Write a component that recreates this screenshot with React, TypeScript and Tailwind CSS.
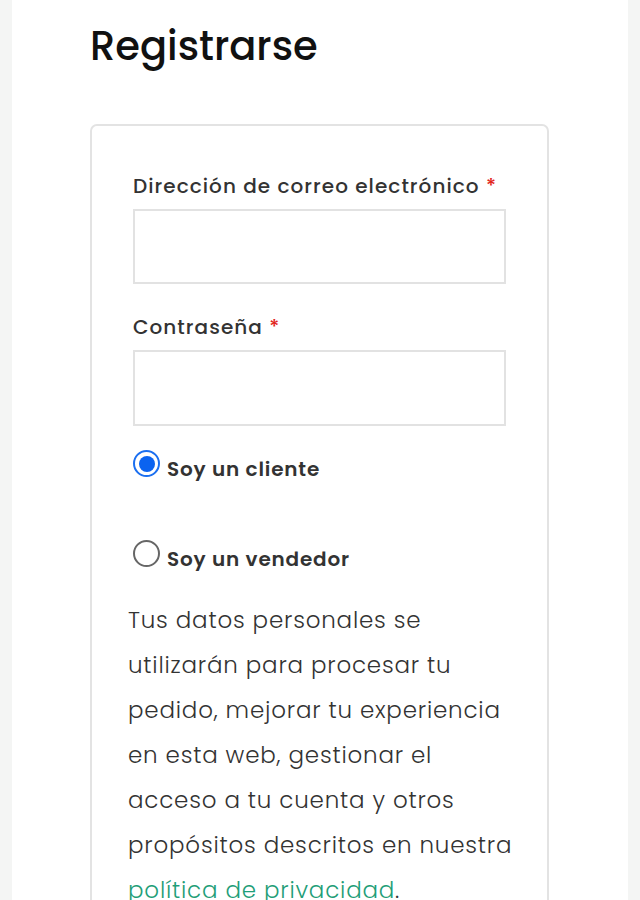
export default function App() {
  return (
    <div className="min-h-[900px] bg-[#f4f5f4] px-[12px] font-['Poppins','Open_Sans',sans-serif]">
      <div className="min-h-[900px] bg-white pl-[78px] pr-[79px] pt-[20px]">
        <h1 className="text-[40px] font-medium leading-[52px] text-[#111]">Registrarse</h1>
        <div className="mt-[52px] h-[800px] rounded-[7px] border-2 border-[#e3e3e3] pt-[46px]">
          <div className="px-[41px]">
            <label className="block text-[20px] font-medium leading-[28px] tracking-[1.05px] text-[#333]">
              Dirección de correo electrónico <span className="text-[#e2231a]">*</span>
            </label>
            <div className="mt-[9px] h-[75px] border-2 border-[#e2e2e2]" />
            <label className="mt-[29px] block text-[20px] font-medium leading-[28px] tracking-[1.05px] text-[#333]">
              Contraseña <span className="text-[#e2231a]">*</span>
            </label>
            <div className="mt-[9px] h-[76px] border-2 border-[#e2e2e2]" />
            <div className="mt-[23px] flex items-start gap-[7px]">
              <span className="mt-[1px] flex h-[27px] w-[27px] items-center justify-center rounded-full border-[2.5px] border-[#1b6ff0]">
                <span className="h-[16px] w-[16px] rounded-full bg-[#0b63f0]" />
              </span>
              <span className="mt-[6px] text-[20px] font-semibold leading-[28px] tracking-[0.8px] text-[#333]">Soy un cliente</span>
            </div>
            <div className="mt-[56px] flex items-start gap-[7px]">
              <span className="mt-[1px] h-[27px] w-[27px] rounded-full border-2 border-[#666]" />
              <span className="mt-[6px] text-[20px] font-semibold leading-[28px] tracking-[0.8px] text-[#333]">Soy un vendedor</span>
            </div>
          </div>
          <p className="mt-[25px] pl-[36px] pr-[26px] text-[23px] font-light leading-[45px] tracking-[0.8px] text-[#333]">
            Tus datos personales se utilizarán para procesar tu pedido, mejorar tu experiencia en esta web, gestionar el acceso a tu cuenta y otros propósitos descritos en nuestra{" "}
            <a className="text-[#1f9e78]">política de privacidad</a>.
          </p>
        </div>
      </div>
    </div>
  );
}
